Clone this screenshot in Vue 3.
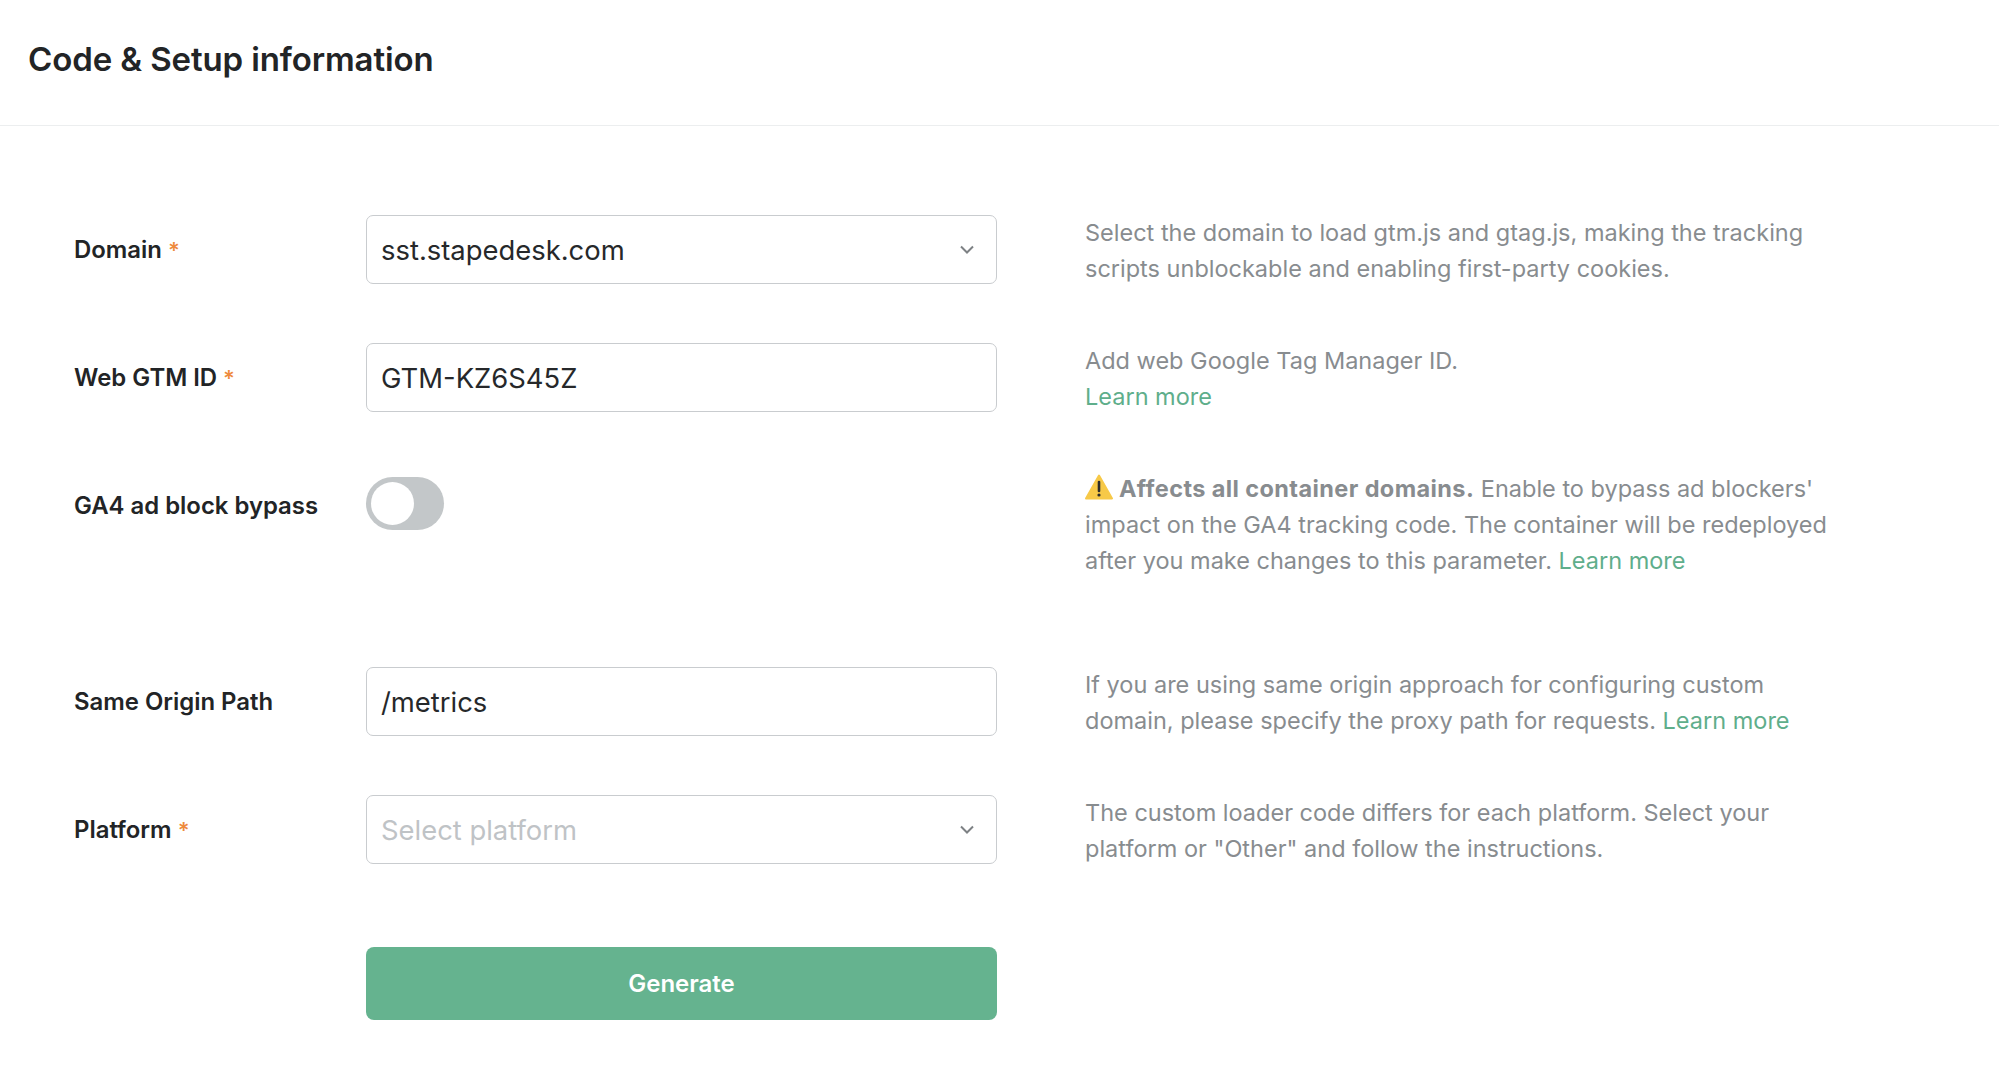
<script setup>
const chevron = 'M1 1.5 L7 7.5 L13 1.5'
</script>

<template>
  <div class="page">
    <header class="head"><h1>Code &amp; Setup information</h1></header>
    <main class="form">
      <section class="row">
        <label class="label">Domain <span class="req">*</span></label>
        <div class="field">
          <span class="value">sst.stapedesk.com</span>
          <svg class="chev" viewBox="0 0 14 9" fill="none"><path :d="chevron" /></svg>
        </div>
        <p class="desc">Select the domain to load gtm.js and gtag.js, making the tracking scripts unblockable and enabling first-party cookies.</p>
      </section>
      <section class="row">
        <label class="label">Web GTM ID <span class="req">*</span></label>
        <div class="field"><span class="value">GTM-KZ6S45Z</span></div>
        <p class="desc">Add web Google Tag Manager ID.<br /><a>Learn more</a></p>
      </section>
      <section class="row row-toggle">
        <label class="label">GA4 ad block bypass</label>
        <div class="toggle"><span class="knob"></span></div>
        <p class="desc">
          <svg class="warn" viewBox="0 0 28 26"><path d="M14 1.5 L27 24.5 H1 Z" fill="#f7c948" stroke="#f7c948" stroke-width="2" stroke-linejoin="round" /><path d="M14 8 V17" stroke="#2b2b2b" stroke-width="2.6" stroke-linecap="round" /><circle cx="14" cy="21" r="1.6" fill="#2b2b2b" /></svg>
          <b>Affects all container domains.</b> Enable to bypass ad blockers' impact on the GA4 tracking code. The container will be redeployed after you make changes to this parameter. <a>Learn more</a>
        </p>
      </section>
      <section class="row">
        <label class="label">Same Origin Path</label>
        <div class="field"><span class="value">/metrics</span></div>
        <p class="desc">If you are using same origin approach for configuring custom domain, please specify the proxy path for requests. <a>Learn more</a></p>
      </section>
      <section class="row">
        <label class="label">Platform <span class="req">*</span></label>
        <div class="field">
          <span class="value placeholder">Select platform</span>
          <svg class="chev" viewBox="0 0 14 9" fill="none"><path :d="chevron" /></svg>
        </div>
        <p class="desc">The custom loader code differs for each platform. Select your platform or "Other" and follow the instructions.</p>
      </section>
      <section class="row row-btn">
        <span></span>
        <button class="btn">Generate</button>
      </section>
    </main>
  </div>
</template>

<style>
html, body { margin: 0; background: #fff; }
</style>

<style scoped>
.page { width: 1999px; height: 1073px; overflow: hidden; background: #fff; font-family: Inter, "Liberation Sans", sans-serif; color: #222426; }
.head { height: 126px; box-sizing: border-box; border-bottom: 1px solid #eceeef; padding: 40px 28px 0; }
h1 { margin: 0; font-size: 33px; line-height: 38px; font-weight: 600; letter-spacing: -0.12px; }
.form { padding: 89px 0 0 74px; }
.row { display: grid; grid-template-columns: 292px 631px 849px; margin-bottom: 56px; }
.row-toggle { margin-bottom: 88px; }
.row-btn { margin-top: 80px; margin-bottom: 0; }
.label { font-size: 23.9px; font-weight: 600; line-height: 69px; }
.req { color: #ee8a3c; font-size: 22px; }
.field { height: 69px; box-sizing: border-box; border: 1px solid #c9cccf; border-radius: 7px; display: flex; align-items: center; justify-content: space-between; padding: 0 22px 0 14px; }
.value { font-size: 27.4px; color: #26282a; }
.placeholder { color: #bfc3c6; }
.chev { width: 14px; height: 9px; }
.chev path { stroke: #7d8184; stroke-width: 2; }
.desc { margin: 0 0 0 88px; font-size: 23.5px; line-height: 36px; color: #888c8f; }
.desc a { color: #5fae8b; }
.desc b { font-weight: 700; letter-spacing: 0.4px; }
.warn { width: 28px; height: 26px; vertical-align: -3px; margin-right: 6px; }
.toggle { width: 78px; height: 53px; margin-top: 6px; box-sizing: border-box; border-radius: 27px; background: #c3c7c9; padding: 5px; }
.knob { display: block; width: 43px; height: 43px; border-radius: 50%; background: #fff; }
.btn { height: 73px; border: 0; border-radius: 8px; background: #65b38f; color: #fff; font: 600 24px Inter, "Liberation Sans", sans-serif; }
</style>
